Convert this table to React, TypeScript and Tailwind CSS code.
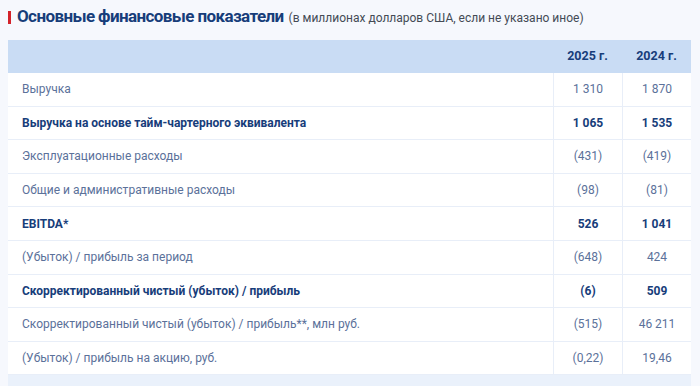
const rows: { label: string; y2025: string; y2024: string; bold?: boolean }[] = [
  { label: "Выручка", y2025: "1 310", y2024: "1 870" },
  { label: "Выручка на основе тайм-чартерного эквивалента", y2025: "1 065", y2024: "1 535", bold: true },
  { label: "Эксплуатационные расходы", y2025: "(431)", y2024: "(419)" },
  { label: "Общие и административные расходы", y2025: "(98)", y2024: "(81)" },
  { label: "EBITDA*", y2025: "526", y2024: "1 041", bold: true },
  { label: "(Убыток) / прибыль за период", y2025: "(648)", y2024: "424" },
  { label: "Скорректированный чистый (убыток) / прибыль", y2025: "(6)", y2024: "509", bold: true },
  { label: "Скорректированный чистый (убыток) / прибыль**, млн руб.", y2025: "(515)", y2024: "46 211" },
  { label: "(Убыток) / прибыль на акцию, руб.", y2025: "(0,22)", y2024: "19,46" },
];

export default function App() {
  return (
    <div className="h-[386px] w-[700px] overflow-hidden bg-[#f6f8fd] pl-2 pr-[9px] font-['Roboto',sans-serif]">
      <div className="flex h-[34px] items-center">
        <div className="mr-[6px] h-[13px] w-[3px] bg-[#d3222a]" />
        <span className="text-[17px] font-bold tracking-[-0.6px] text-[#173d7a]">
          Основные финансовые показатели
        </span>
        <span className="ml-[5px] pt-[2px] text-[12px] text-[#444b55]">
          (в миллионах долларов США, если не указано иное)
        </span>
      </div>
      <div className="mt-[6px] bg-[#eaf1fb]">
        <div className="grid h-[33px] grid-cols-[545px_69px_69px] bg-[#c9dcf4] text-[12.5px] font-bold text-[#173d7a]">
          <div />
          <div className="flex items-center justify-center">2025 г.</div>
          <div className="flex items-center justify-center">2024 г.</div>
        </div>
        {rows.map((r) => (
          <div
            key={r.label}
            className={`grid h-[33.6px] grid-cols-[545px_69px_69px] border-b border-[#e8eef8] bg-white text-[12px] ${
              r.bold ? "font-bold text-[#173d7a]" : "text-[#5b719a]"
            }`}
          >
            <div className="flex items-center pl-[14px]">{r.label}</div>
            <div className="flex items-center justify-center border-l border-[#e8eef8]">{r.y2025}</div>
            <div className="flex items-center justify-center border-l border-[#e8eef8]">{r.y2024}</div>
          </div>
        ))}
        <div className="h-[20px]" />
      </div>
    </div>
  );
}
